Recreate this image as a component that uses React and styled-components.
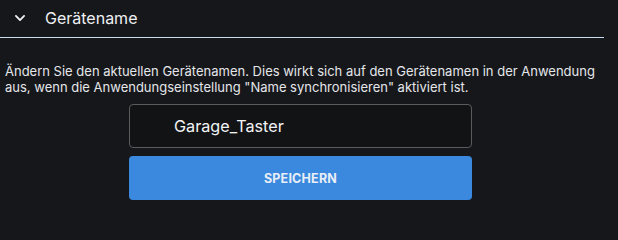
import React from 'react';
import styled, { createGlobalStyle } from 'styled-components';

const Global = createGlobalStyle`
    html, body {
        margin: 0;
        padding: 0;
        background: #16171a;
    }
    body {
        font-family: Inter, "Noto Sans", sans-serif;
        color: #e6e8ec;
    }
`

const Page = styled.div`
    width: 618px;
    height: 240px;
    overflow: hidden;
    background: #16171a;
`

const Header = styled.div`
    display: flex;
    align-items: center;
    height: 38px;
    width: 604px;
    border-bottom: 1px solid #c9dcef;
    box-sizing: border-box;
    padding-left: 13px;
    padding-bottom: 2px;
    cursor: pointer;
`

const Chevron = styled.svg`
    width: 14px;
    height: 14px;
    flex: none;
`

const Title = styled.span`
    margin-left: 18px;
    font-size: 16px;
    color: #eef0f3;
`

const Body = styled.div`
    padding: 25px 0 0 5px;
    display: flex;
    flex-direction: column;
`

const Description = styled.p`
    margin: 0;
    max-width: 600px;
    font-size: 13px;
    line-height: 16px;
    color: #e4e6ea;
`

const Form = styled.div`
    display: flex;
    flex-direction: column;
    gap: 8px;
    width: 343px;
    margin: 9px 0 0 124px;
`

const NameInput = styled.input`
    box-sizing: border-box;
    height: 44px;
    width: 100%;
    background: #121315;
    border: 1px solid #5a5b5e;
    border-radius: 4px;
    padding: 0 0 0 44px;
    font-family: Inter, "Noto Sans", sans-serif;
    font-size: 16.2px;
    color: #f2f3f5;
    outline: none;
`

const SaveButton = styled.button`
    height: 44px;
    width: 100%;
    border: none;
    border-radius: 4px;
    background: #3a89de;
    color: #e9eef7;
    font-family: Inter, "Noto Sans", sans-serif;
    font-size: 12.5px;
    font-weight: 700;
    letter-spacing: 0.2px;
    cursor: pointer;
`

export default function App() {
    return (
        <Page>
            <Global />
            <Header>
                <Chevron viewBox="0 0 24 24" fill="none" stroke="#eef0f3" strokeWidth="3.2" strokeLinecap="round" strokeLinejoin="round">
                    <path d="M5 8.5l7 7 7-7" />
                </Chevron>
                <Title>Gerätename</Title>
            </Header>
            <Body>
                <Description>
                    Ändern Sie den aktuellen Gerätenamen. Dies wirkt sich auf den Gerätenamen in der Anwendung aus, wenn die Anwendungseinstellung "Name synchronisieren" aktiviert ist.
                </Description>
                <Form>
                    <NameInput defaultValue="Garage_Taster" />
                    <SaveButton>SPEICHERN</SaveButton>
                </Form>
            </Body>
        </Page>
    );
}
